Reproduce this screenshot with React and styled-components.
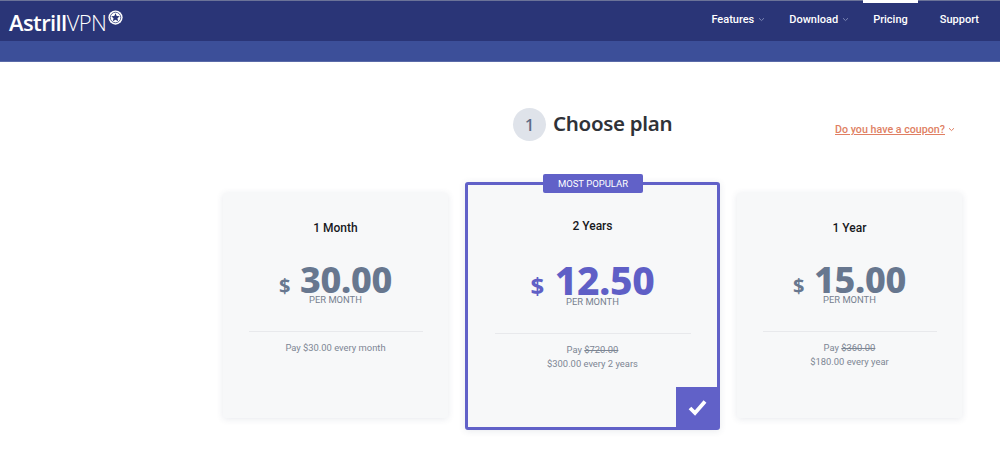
import React from 'react'
import styled, {createGlobalStyle} from 'styled-components'

const GlobalStyle = createGlobalStyle`
  html, body {
    margin: 0;
    padding: 0;
    background: #fff;
    font-family: Roboto, "Liberation Sans", sans-serif;
  }
`

const Page = styled.div`
  width: 1000px;
  height: 458px;
  overflow: hidden;
  background: #fff;
`

const Header = styled.header`
  height: 41px;
  box-sizing: border-box;
  border-top: 1px solid #6b7398;
  background: #2a3577;
  display: flex;
  align-items: stretch;
  justify-content: space-between;
  padding: 0 21px 0 9px;
`

const Strip = styled.div`
  height: 21px;
  background: #3c4f99;
  border-bottom: 1px solid #5a6aa8;
  box-sizing: border-box;
`

const Logo = styled.div`
  display: flex;
  align-items: flex-start;
  padding-top: 8px;
  color: #fff;
  font-family: "Open Sans", sans-serif;
  font-size: 22px;
  line-height: 26px;
  letter-spacing: -0.6px;
  > b { font-weight: 600; }
  > span { font-weight: 300; }
  > svg { margin: 1px 0 0 2px; }
`

const Nav = styled.nav`
  display: flex;
  align-items: stretch;
  gap: 24px;
`

const NavItem = styled.a`
  position: relative;
  display: flex;
  align-items: center;
  gap: 4px;
  margin-left: ${props => props.$push ? '8px' : '0'};
  color: #fff;
  font-size: 11px;
  font-weight: 500;
  padding-bottom: 4px;
  &::before {
    content: '';
    display: ${props => props.$active ? 'block' : 'none'};
    position: absolute;
    top: -1px;
    left: -10px;
    right: -10px;
    height: 3px;
    background: #fff;
  }
`

const Main = styled.main`
  padding-top: 45px;
`

const TitleRow = styled.div`
  height: 34px;
  display: flex;
  align-items: center;
  padding: 0 45px 0 513px;
`

const StepBadge = styled.div`
  width: 33px;
  height: 33px;
  border-radius: 50%;
  background: #dfe3ea;
  color: #5d6b85;
  display: flex;
  align-items: center;
  justify-content: center;
  font-family: "Noto Sans", sans-serif;
  font-size: 17px;
  font-weight: 500;
`

const Title = styled.h1`
  margin: 0 0 2px 7px;
  color: #2f3238;
  font-family: "Noto Sans", sans-serif;
  font-size: 20.5px;
  font-weight: 600;
  letter-spacing: -0.3px;
  line-height: 30px;
`

const Coupon = styled.a`
  margin: 11px 0 0 auto;
  display: flex;
  align-items: center;
  gap: 3px;
  color: #e07f63;
  font-size: 10.7px;
  font-weight: 500;
  > span { text-decoration: underline; }
`

const Cards = styled.div`
  display: flex;
  align-items: flex-start;
  gap: 17px;
  padding: 41px 0 0 223px;
`

const Card = styled.article`
  position: relative;
  box-sizing: border-box;
  width: ${props => props.$featured ? '255px' : '225px'};
  height: ${props => props.$featured ? '248px' : '225px'};
  margin-top: ${props => props.$featured ? '0' : '11px'};
  padding-top: ${props => props.$featured ? '33px' : '27px'};
  background: #f7f8f9;
  border: ${props => props.$featured ? '3px solid #6161c8' : '0'};
  border-radius: 3px;
  box-shadow: 0 1px 7px rgba(60, 70, 110, 0.12);
  display: flex;
  flex-direction: column;
  align-items: center;
  text-align: center;
`

const Ribbon = styled.div`
  position: absolute;
  top: -11px;
  left: 75px;
  width: 100px;
  height: 19px;
  border-radius: 2px;
  background: #6161c8;
  color: #fff;
  font-size: 9.5px;
  font-weight: 400;
  line-height: 19px;
`

const Plan = styled.h2`
  margin: 0;
  color: #17191d;
  font-size: 12px;
  font-weight: 500;
  line-height: 16px;
`

const Price = styled.div`
  margin-top: ${props => props.$featured ? '26px' : '24px'};
  display: flex;
  align-items: baseline;
  gap: ${props => props.$featured ? '11px' : '10px'};
  height: 40px;
  line-height: 40px;
  color: ${props => props.$featured ? '#5f5fc6' : '#67778f'};
  font-family: "Noto Sans", sans-serif;
  letter-spacing: -0.3px;
  > small {
    font-size: ${props => props.$featured ? '24px' : '20px'};
    font-weight: 700;
  }
  > strong {
    font-size: ${props => props.$featured ? '39px' : '36px'};
    font-weight: 800;
  }
`

const Per = styled.div`
  margin-top: ${props => props.$featured ? '-4px' : '-6px'};
  color: #76808f;
  font-size: 9.4px;
  line-height: 12px;
`

const Rule = styled.hr`
  width: ${props => props.$featured ? '196px' : '174px'};
  margin: 25px 0 0;
  border: 0;
  border-top: 1px solid #e8e9ec;
`

const Note = styled.p`
  margin: 9px 0 0;
  color: #7d8694;
  font-size: 9.4px;
  line-height: 14px;
  > s { text-decoration: line-through; }
`

const Check = styled.div`
  position: absolute;
  right: -1px;
  bottom: -1px;
  width: 42px;
  height: 41px;
  background: #6161c8;
  display: flex;
  align-items: center;
  justify-content: center;
`

const Chevron = ({color}) => (
  <svg width="7" height="5" viewBox="0 0 7 5" fill="none">
    <path d="M1 1.2 3.5 3.6 6 1.2" stroke={color} strokeWidth="1" />
  </svg>
)

const StarBadge = () => (
  <svg width="15" height="15" viewBox="0 0 16 16">
    <circle cx="8" cy="8" r="7.6" fill="#fff" />
    <circle cx="8" cy="8" r="5.6" fill="none" stroke="#2a3577" strokeWidth="0.8" />
    <path d="M8 3.4 9.3 6.4 12.5 6.7 10.1 8.8 10.9 12 8 10.3 5.1 12 5.9 8.8 3.5 6.7 6.7 6.4Z" fill="#2a3577" />
  </svg>
)

const plans = [
  {name: '1 Month', price: '30.00', notes: [['Pay $30.00 every month']]},
  {name: '2 Years', price: '12.50', featured: true, notes: [['Pay ', '$720.00'], ['$300.00 every 2 years']]},
  {name: '1 Year', price: '15.00', notes: [['Pay ', '$360.00'], ['$180.00 every year']]},
]

export default function App() {
  return (
    <Page>
      <GlobalStyle />
      <Header>
        <Logo><b>Astrill</b><span>VPN</span><StarBadge /></Logo>
        <Nav>
          <NavItem>Features <Chevron color="#7d87b5" /></NavItem>
          <NavItem>Download <Chevron color="#7d87b5" /></NavItem>
          <NavItem $active>Pricing</NavItem>
          <NavItem $push>Support</NavItem>
        </Nav>
      </Header>
      <Strip />
      <Main>
        <TitleRow>
          <StepBadge>1</StepBadge>
          <Title>Choose plan</Title>
          <Coupon><span>Do you have a coupon?</span> <Chevron color="#e07f63" /></Coupon>
        </TitleRow>
        <Cards>
          {plans.map(plan => (
            <Card key={plan.name} $featured={plan.featured}>
              {plan.featured && <Ribbon>MOST POPULAR</Ribbon>}
              <Plan>{plan.name}</Plan>
              <Price $featured={plan.featured}>
                <small>$</small>
                <strong>{plan.price}</strong>
              </Price>
              <Per $featured={plan.featured}>PER MONTH</Per>
              <Rule $featured={plan.featured} />
              <Note>
                {plan.notes.map((line, i) => (
                  <React.Fragment key={i}>
                    {line[0]}{line[1] && <s>{line[1]}</s>}
                    {i < plan.notes.length - 1 && <br />}
                  </React.Fragment>
                ))}
              </Note>
              {plan.featured && (
                <Check>
                  <svg width="19" height="17" viewBox="0 0 19 17" fill="none">
                    <path d="M2 9 7 14 17 2.5" stroke="#fff" strokeWidth="3.8" />
                  </svg>
                </Check>
              )}
            </Card>
          ))}
        </Cards>
      </Main>
    </Page>
  )
}
